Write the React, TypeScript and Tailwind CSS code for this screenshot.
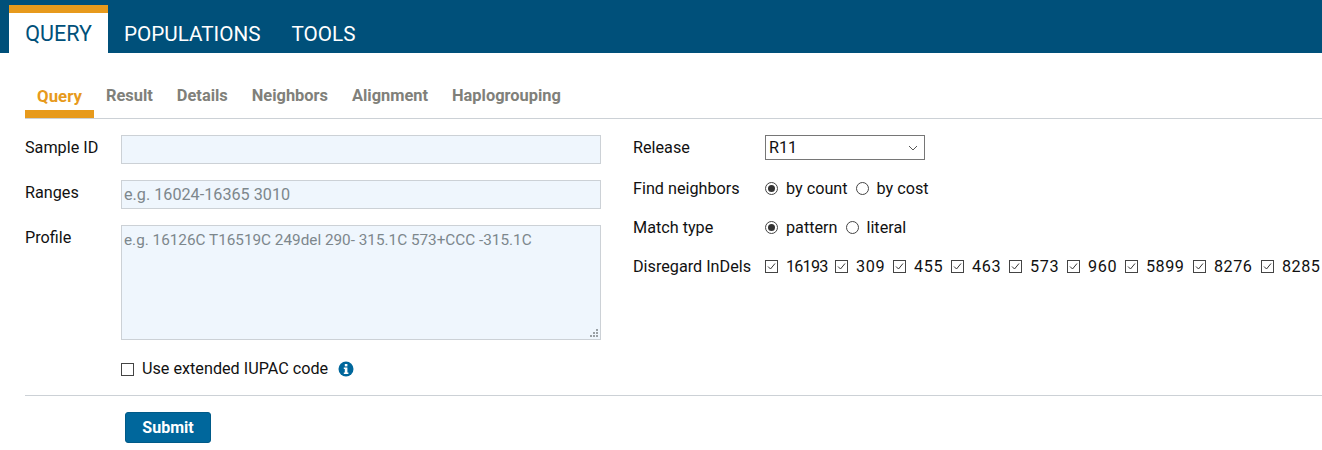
const font = "font-['Roboto',sans-serif]";

const inputClass =
	"block w-[480px] border border-[#ccd1d6] bg-[#eff6fd] px-[2px] text-[#111] placeholder:text-[#7d878c] outline-none";

const subTabs = ["Result", "Details", "Neighbors", "Alignment", "Haplogrouping"];
const indels = [
	{ n: "16193", w: "w-[41px] tracking-[-0.8px]" },
	{ n: "309", w: "w-[29px] tracking-[0.6px]" },
	{ n: "455", w: "w-[29px] tracking-[0.6px]" },
	{ n: "463", w: "w-[29px] tracking-[0.6px]" },
	{ n: "573", w: "w-[29px] tracking-[0.6px]" },
	{ n: "960", w: "w-[29px] tracking-[0.6px]" },
	{ n: "5899", w: "w-[39px] tracking-[0.5px]" },
	{ n: "8276", w: "w-[39px] tracking-[0.5px]" },
	{ n: "8285", w: "w-[39px] tracking-[0.5px]" },
];

function Radio({ checked }: { checked?: boolean }) {
	return (
		<span className="inline-flex h-[13px] w-[13px] shrink-0 items-center justify-center rounded-full border border-[#444] bg-white">
			{checked && <span className="h-[7px] w-[7px] rounded-full bg-[#333]" />}
		</span>
	);
}

function Check({ checked }: { checked?: boolean }) {
	return (
		<span className="inline-flex h-[13px] w-[13px] shrink-0 items-center justify-center border border-[#444] bg-white">
			{checked && (
				<svg width="11" height="11" viewBox="0 0 11 11" fill="none" stroke="#333" strokeWidth="1" aria-hidden="true">
					<path d="M2 5.5 4.5 8 9 2.5" />
				</svg>
			)}
		</span>
	);
}

export default function App() {
	return (
		<div className={`${font} min-h-[450px] bg-white text-[16.2px] text-[#111]`}>
			<div className="flex h-[53px] items-end bg-[#00507a] pl-[9px] text-[20.7px] text-white">
				<div className="flex h-[48px] w-[99px] items-center justify-center border-t-[8px] border-[#e79a1c] bg-white pt-[3px] text-[21.5px] text-[#00507a]">
					QUERY
				</div>
				<div className="flex h-[40px] items-center pl-[16px] pt-[3px]">POPULATIONS</div>
				<div className="flex h-[40px] items-center pl-[31px] pt-[3px]">TOOLS</div>
			</div>

			<div className="ml-[25px] mt-[26px] flex h-[40px] items-start border-b border-[#ccd1d6] text-[16.4px] font-bold text-[#80807a]">
				<div className="flex h-[39px] w-[69px] items-center justify-center border-b-[8px] border-[#e79a1c] pt-[4px] text-[16.8px] text-[#e79a1c]">
					Query
				</div>
				<div className="flex h-[31px] items-center gap-[24px] pl-[12px] pt-[4px]">
					{subTabs.map((tab) => (
						<span key={tab}>{tab}</span>
					))}
				</div>
			</div>

			<div className="ml-[25px] mt-[16px] flex">
				<div className="w-[608px] shrink-0">
					<div className="flex h-[29px]">
						<label className="w-[96px] pt-[1px]">Sample ID</label>
						<input className={`${inputClass} h-[29px] text-[16.2px]`} />
					</div>
					<div className="mt-[16px] flex h-[29px]">
						<label className="w-[96px] pt-[1px]">Ranges</label>
						<input className={`${inputClass} h-[29px] text-[16.2px]`} placeholder="e.g. 16024-16365 3010" />
					</div>
					<div className="mt-[16px] flex">
						<label className="w-[96px] pt-[1px]">Profile</label>
						<div className="relative">
							<textarea
								className={`${inputClass} h-[115px] resize-none pt-[3px] text-[15.3px]`}
								placeholder="e.g. 16126C T16519C 249del 290- 315.1C 573+CCC -315.1C"
							/>
							<svg className="absolute bottom-[2px] right-[2px]" width="9" height="9" viewBox="0 0 9 9" fill="#9aa0a4" aria-hidden="true">
								<rect x="6" y="0" width="2" height="2" />
								<rect x="3" y="3" width="2" height="2" />
								<rect x="6" y="3" width="2" height="2" />
								<rect x="0" y="6" width="2" height="2" />
								<rect x="3" y="6" width="2" height="2" />
								<rect x="6" y="6" width="2" height="2" />
							</svg>
						</div>
					</div>
					<div className="ml-[96px] mt-[17px] flex items-center">
						<Check />
						<span className="ml-[8px]">Use extended IUPAC code</span>
						<svg className="ml-[10px]" width="16" height="16" viewBox="0 0 16 16" aria-hidden="true">
							<circle cx="8" cy="8" r="7.5" fill="#00679c" />
							<rect x="6.8" y="3" width="2.6" height="2.4" fill="#fff" />
							<path d="M5.8 6.6h3.6v5h1v1.4H5.8v-1.4h1v-3.6h-1z" fill="#fff" />
						</svg>
					</div>
				</div>

				<div className="flex flex-col">
					<div className="flex h-[25px] items-center">
						<span className="w-[132px] pt-[2px]">Release</span>
						<div className="flex h-[25px] w-[160px] items-center justify-between border border-[#767676] pl-[3px] pr-[6px]">
							<span className="pt-[2px]">R11</span>
							<svg width="10" height="6" viewBox="0 0 10 6" fill="none" stroke="#555" aria-hidden="true">
								<path d="M1 1l4 4 4-4" />
							</svg>
						</div>
					</div>
					<div className="mt-[16px] flex h-[24px] items-center">
						<span className="w-[132px] pt-[2px]">Find neighbors</span>
						<Radio checked />
						<span className="ml-[8px] pt-[2px]">by count</span>
						<span className="ml-[8px] flex"><Radio /></span>
						<span className="ml-[8px] pt-[2px]">by cost</span>
					</div>
					<div className="mt-[15px] flex h-[24px] items-center">
						<span className="w-[132px] pt-[2px]">Match type</span>
						<Radio checked />
						<span className="ml-[8px] pt-[2px]">pattern</span>
						<span className="ml-[8px] flex"><Radio /></span>
						<span className="ml-[8px] pt-[2px]">literal</span>
					</div>
					<div className="mt-[15px] flex h-[24px] items-center whitespace-nowrap">
						<span className="w-[132px] pt-[3px]">Disregard InDels</span>
						{indels.map(({ n, w }) => (
							<span key={n} className="mr-[8px] flex items-center">
								<Check checked />
								<span className={`ml-[8px] pt-[3px] ${w}`}>{n}</span>
							</span>
						))}
					</div>
				</div>
			</div>

			<div className="ml-[25px] mt-[14px] border-t border-[#ccd1d6] pl-[100px] pt-[16px]">
				<button
					type="button"
					className="h-[31px] w-[86px] rounded-[3px] border border-[#005a88] bg-[#00679c] text-[16px] font-bold text-white"
				>
					Submit
				</button>
			</div>
		</div>
	);
}
